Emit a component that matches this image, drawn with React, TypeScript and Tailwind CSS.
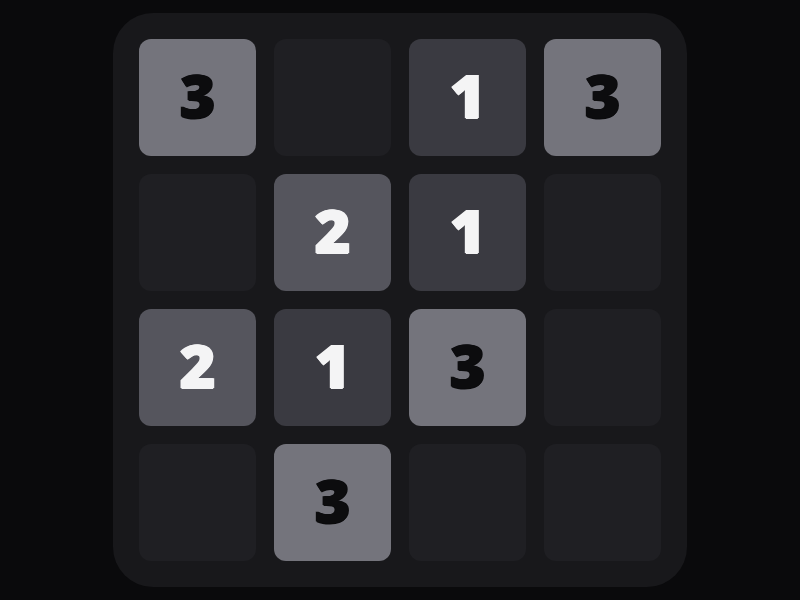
const board: number[][] = [
  [3, 0, 1, 3],
  [0, 2, 1, 0],
  [2, 1, 3, 0],
  [0, 3, 0, 0],
]

const tileStyles: Record<number, string> = {
  0: 'bg-[#1f1f23]',
  1: 'bg-[#3a3a41] text-[#f4f4f5]',
  2: 'bg-[#55555d] text-[#f4f4f5]',
  3: 'bg-[#74747c] text-[#0c0c0e]',
}

export default function App() {
  return (
    <div className="flex h-[600px] w-full items-center justify-center bg-[#0a0a0c] font-['Open_Sans',sans-serif]">
      <div className="grid h-[574px] w-[574px] grid-cols-4 grid-rows-4 gap-[18px] rounded-[40px] bg-[#18181b] p-[26px]">
        {board.flat().map((v, i) => (
          <div
            key={i}
            className={`flex items-center justify-center rounded-xl pb-[7px] text-[61px] font-extrabold leading-none [text-shadow:1px_0_0_currentColor,-1px_0_0_currentColor,0_1px_0_currentColor] ${tileStyles[v]}`}
          >
            {v > 0 ? v : ''}
          </div>
        ))}
      </div>
    </div>
  )
}
